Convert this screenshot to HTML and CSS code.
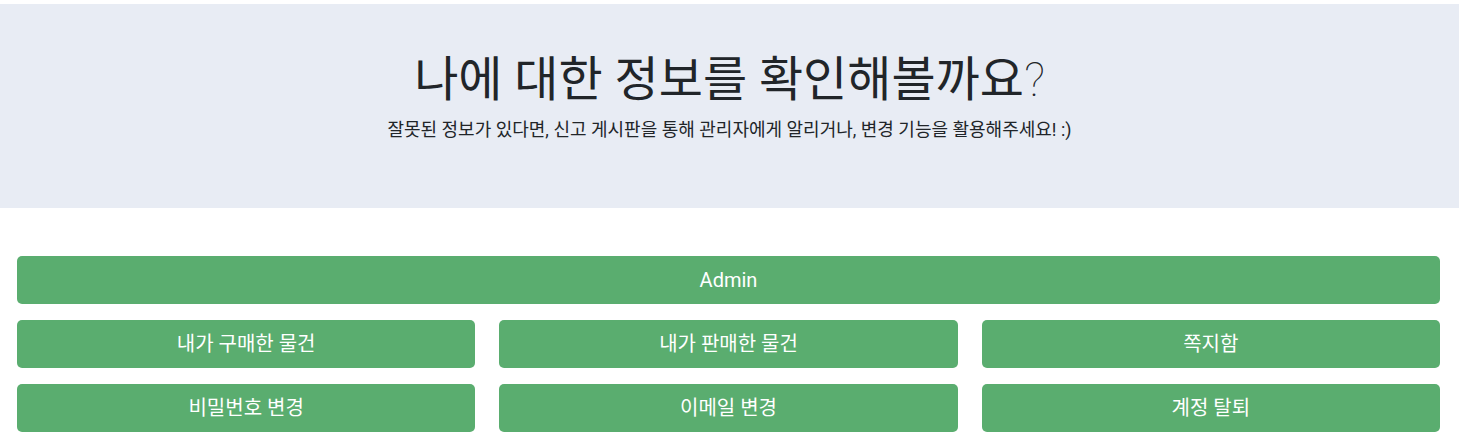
FILE: index.html
```html
<!DOCTYPE html>
<html lang="ko">
<head>
<meta charset="utf-8">
<title>내 정보</title>
<link rel="stylesheet" href="styles.css">
</head>
<body>
<section class="hero">
  <h1 class="hero-title">나에 대한 정보를 확인해볼까요<span class="q">?</span></h1>
  <p class="hero-sub">잘못된 정보가 있다면, 신고 게시판을 통해 관리자에게 알리거나, 변경 기능을 활용해주세요! :)</p>
</section>
<main class="menu">
  <a class="btn btn-wide" href="#">Admin</a>
  <div class="grid">
    <a class="btn" href="#">내가 구매한 물건</a>
    <a class="btn" href="#">내가 판매한 물건</a>
    <a class="btn" href="#">쪽지함</a>
    <a class="btn" href="#">비밀번호 변경</a>
    <a class="btn" href="#">이메일 변경</a>
    <a class="btn" href="#">계정 탈퇴</a>
  </div>
</main>
</body>
</html>
```
FILE: styles.css
```css
html, body {
  margin: 0;
  padding: 0;
  background: #ffffff;
}
body {
  padding-top: 4px;
  font-family: Roboto, "Noto Sans CJK KR", sans-serif;
  color: #212529;
}
.hero {
  background: #e8ecf4;
  height: 204px;
  box-sizing: border-box;
  padding-top: 47px;
  text-align: center;
}
.hero-title {
  margin: 0;
  font-size: 48px;
  font-weight: 400;
  line-height: 58px;
  color: #212529;
}
.hero-title .q {
  font-weight: 100;
}
.hero-sub {
  margin: 8px 0 0;
  font-size: 18px;
  line-height: 26px;
  font-weight: 400;
}
.menu {
  padding: 48px 19px 0 17px;
  display: flex;
  flex-direction: column;
  gap: 16px;
}
.grid {
  display: grid;
  grid-template-columns: repeat(3, 1fr);
  column-gap: 24px;
  row-gap: 16px;
}
.btn {
  display: block;
  height: 48px;
  line-height: 48px;
  text-align: center;
  background: #5aad6f;
  color: #ffffff;
  border-radius: 5px;
  font-size: 20px;
  text-decoration: none;
}
```
